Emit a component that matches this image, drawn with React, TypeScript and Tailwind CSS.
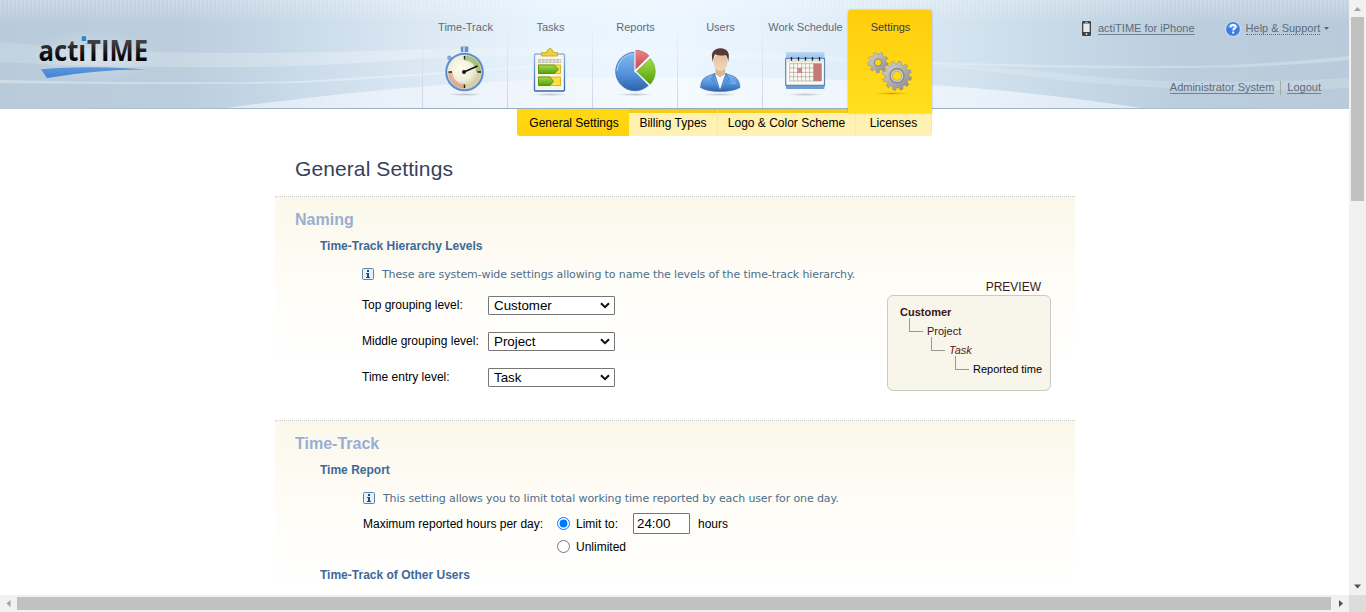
import React from "react";

const BG_STRIPES =
  "absolute inset-x-0 top-0 h-6 bg-[repeating-linear-gradient(90deg,rgba(255,255,255,0.18)_0px,rgba(255,255,255,0.18)_2px,transparent_2px,transparent_4px)] [mask-image:linear-gradient(#000,transparent)]";

function HeaderBackdrop() {
  return (
    <div className="absolute inset-0 overflow-hidden bg-[linear-gradient(90deg,#b9cbdb_0px,#bccddd_180px,#c5d7e6_270px,#dbe8f4_420px,#e9f5fe_560px,#ebf6ff_675px,#e4f1fb_790px,#d7e6f2_932px,#c8dae8_1050px,#bccede_1180px,#b9cbdb_1349px)]">
      <div className="absolute inset-x-0 top-0 h-6 bg-linear-to-b from-white/15 to-transparent" />
      <div className={BG_STRIPES} />
      <svg className="absolute inset-0" width="1349" height="109" viewBox="0 0 1349 109">
        <path d="M0 42 Q110 52 215 53 Q330 53 430 49 L430 58 Q330 66 250 67 Q100 68 0 62Z" fill="url(#band)" />
        <path d="M430 49 Q560 44 700 50 Q820 55 932 62 L932 66 Q800 60 700 58 Q560 54 430 58Z" fill="#fff" opacity=".18" />
        <path d="M932 62 Q1060 66 1180 66 Q1270 65 1349 56 L1349 60 Q1270 68 1180 68 Q1060 69 932 64Z" fill="#fff" opacity=".25" />
        <path d="M932 64 Q1010 68 1050 72 Q1180 88 1349 78 L1349 88 Q1180 94 1050 79 Q1000 72 932 66Z" fill="#fff" opacity=".16" />
        <path d="M0 80 Q200 84 300 81 Q430 73 620 60 Q430 76 300 83 Q200 85 0 83Z" fill="#fff" opacity=".32" />
        <path d="M225 108 Q350 92 430 86 Q560 76 675 77 Q820 77 932 85 Q1040 92 1142 108Z" fill="url(#hill)" />
        <path d="M0 108.5H1349" stroke="url(#edge)" />
        <defs>
          <linearGradient id="band" x1="0" x2="430" y1="0" y2="0" gradientUnits="userSpaceOnUse">
            <stop offset="0" stopColor="#fff" stopOpacity=".14" />
            <stop offset="1" stopColor="#fff" stopOpacity=".28" />
          </linearGradient>
          <linearGradient id="hill" x1="225" x2="1142" y1="0" y2="0" gradientUnits="userSpaceOnUse">
            <stop offset="0" stopColor="#dfe8f2" />
            <stop offset=".2" stopColor="#ecf2fa" />
            <stop offset=".5" stopColor="#f5faff" />
            <stop offset=".8" stopColor="#ebf2fa" />
            <stop offset="1" stopColor="#dde8f2" />
          </linearGradient>
          <linearGradient id="edge" x1="0" x2="1349" y1="0" y2="0" gradientUnits="userSpaceOnUse">
            <stop offset="0" stopColor="#b9cbdb" />
            <stop offset=".2" stopColor="#9fb6cc" />
            <stop offset=".5" stopColor="#8fa6bb" />
            <stop offset=".8" stopColor="#9fb6cc" />
            <stop offset="1" stopColor="#b9cbdb" />
          </linearGradient>
        </defs>
      </svg>
    </div>
  );
}

function Logo() {
  return (
    <svg width="130" height="56" viewBox="30 28 130 56">
      <defs>
        <linearGradient id="ink" x1="0" x2="0" y1="40" y2="61" gradientUnits="userSpaceOnUse">
          <stop offset="0" stopColor="#444" />
          <stop offset=".7" stopColor="#111" />
          <stop offset="1" stopColor="#000" />
        </linearGradient>
        <linearGradient id="swoosh" x1="0" x2="0" y1="0" y2="1">
          <stop offset="0" stopColor="#6098da" />
          <stop offset="1" stopColor="#3f82d6" />
        </linearGradient>
        <radialGradient id="halo">
          <stop offset="0" stopColor="#fff" stopOpacity=".3" />
          <stop offset="1" stopColor="#fff" stopOpacity="0" />
        </radialGradient>
      </defs>
      <ellipse cx="94" cy="56" rx="64" ry="27" fill="url(#halo)" />
      <text x="38.5" y="60.5" fontSize="28.5" fontWeight="700" fontFamily="'Open Sans', sans-serif" fill="url(#ink)" textLength="109.5" lengthAdjust="spacingAndGlyphs">
        actiTIME
      </text>
      <rect x="80" y="35" width="7.5" height="8.6" fill="#c3d2e0" />
      <rect x="81.7" y="36.2" width="4.4" height="4.8" fill="#2f86c8" />
      <path d="M41 69.3 Q60 67 92 67.2 Q125 67.8 147 69.5 Q100 69 47 78Z" fill="url(#swoosh)" />
    </svg>
  );
}

const Shadow = () => <ellipse cx="24" cy="47.5" rx="18" ry="1.6" fill="url(#shade)" />;

function StopwatchIcon() {
  return (
    <g>
      <Shadow />
      <rect x="19.800" y="-.5" width="7.500" height="5.5" rx="1" fill="#5f92cc" />
      <rect x="22" y="0" width="2" height="5" fill="#a9cbee" />
      <circle cx="8.300" cy="10.8" r="2.2" fill="#7ea8d8" />
      <circle cx="23.500" cy="25" r="18.3" fill="url(#dial)" stroke="#5b8fd2" strokeWidth="2" />
      <path d="M23.500 8.500A16.500 16.500 0 0 1 40 25H35A11.500 11.500 0 0 0 23.500 13.500Z" fill="#8fb35c" opacity=".7" />
      <path d="M23.500 41.500A16.500 16.500 0 0 1 7 25H11.500A12 12 0 0 0 23.500 37Z" fill="#dd9a88" opacity=".7" />
      <path d="M23.500 9v3.500M23.500 37.500v3.500M7.500 25H11M36.500 25H40" stroke="#222" strokeWidth="1.4" />
      <path d="M23 25L36.500 19" stroke="#111" strokeWidth="1.400" />
      <circle cx="23" cy="25" r="2" fill="#111" />
    </g>
  );
}

function ClipboardIcon() {
  return (
    <g>
      <Shadow />
      <rect x="8.500" y="7" width="30" height="37" rx="1" fill="#f8f6ea" stroke="url(#frame)" strokeWidth="1.300" />
      <path d="M15.500 5.500h5.500v-2h1a2 2 0 0 1 4 0h1v2H31.500v3.500h-16Z" fill="#ecd23f" stroke="#c9a820" strokeWidth=".9" />
      <path d="M12 12.900h23M12 15.100h23" stroke="#888" strokeWidth=".8" strokeDasharray="3 .6" />
      <g stroke="#d3b520" fill="#ffe03a" strokeWidth=".9">
        <rect x="12.500" y="18" width="22" height="8.500" />
        <rect x="12.500" y="30" width="22" height="8.500" />
      </g>
      <path d="M12.500 18H28.500L32.500 22.250L28.500 26.500H12.500Z" fill="url(#green)" stroke="#3f8a0c" strokeWidth=".7" />
      <path d="M12.500 30H24L27.500 34.250L24 38.500H12.500Z" fill="url(#green)" stroke="#3f8a0c" strokeWidth=".7" />
    </g>
  );
}

function PieIcon() {
  return (
    <g>
      <Shadow />
      <path d="M23.500 5.200A19.300 19.300 0 1 0 37.500 38.300L23.500 24.500Z" fill="url(#blue)" stroke="#3f79be" strokeWidth=".9" />
      <path d="M22.500 7A17.500 17.500 0 0 0 6 24" stroke="#a9cdf1" strokeWidth="1" fill="none" />
      <path d="M24.300 3.300A19 19 0 0 1 38 8.800L24.300 22.800Z" fill="url(#red)" stroke="#c24f55" strokeWidth=".6" />
      <path d="M39.300 11.500A19 19 0 0 1 39 37.500L25.500 24.500Z" fill="url(#green)" stroke="#66a91c" strokeWidth=".6" />
      <path d="M23.900 3V24.300L39 9.500M24.500 24.500L38.500 38.300" stroke="#f5faff" strokeWidth="1.200" fill="none" />
    </g>
  );
}

function UserIcon() {
  return (
    <g>
      <Shadow />
      <path d="M4.500 40.500Q5 31 12 29L19 26.500h10L37 29Q43.500 31.500 44 40.500Q37 44.500 24 44.500T4.500 40.500Z" fill="url(#blue)" stroke="#2f69ae" strokeWidth=".6" />
      <path d="M18.500 26.500L24 43.500L30 26.500Z" fill="#f6f9fd" />
      <path d="M18.500 26L15.500 32L24 43.500ZM30 26L33 32L24 43.500Z" fill="#5f9ade" stroke="#2f69ae" strokeWidth=".5" />
      <path d="M19.500 20h9.500v7l-5 3.500l-4.500-3.500Z" fill="#dcb592" />
      <ellipse cx="24.500" cy="15" rx="7" ry="9" fill="url(#skin)" />
      <path d="M16.800 15Q14.500 6 18 3.500Q23 -.5 29.500 2.500Q34.500 5 32.200 15Q31.800 10 29.500 8Q24 9.500 19 7.200Q17.500 10 16.800 15Z" fill="#5a3833" />
      <path d="M35 36.500l2.500-3l2 3Z" fill="none" stroke="#8fc0f0" strokeWidth=".7" />
    </g>
  );
}

function CalendarIcon() {
  return (
    <g>
      <Shadow />
      <rect x="5" y="5" width="38.500" height="9" rx="1" fill="url(#sky)" />
      <rect x="5" y="36" width="38.500" height="6" rx="1" fill="#6e9ccd" />
      <rect x="4.700" y="11.500" width="38.800" height="26.800" fill="#fbfaf3" stroke="#5a87b9" strokeWidth="1.200" />
      <path d="M5.300 12h37.600v3.500H5.300Z" fill="#e9e5d6" />
      <path d="M32.500 16.500h8v17.500h-8Z" fill="#cc7774" />
      <path d="M16.500 21h4.500v5h-4.500Z" fill="#d98886" />
      <path d="M8.500 16.700h32M8.500 21h32M8.500 25.400h32M8.500 29.700h32M8.500 34h32M8.700 16.500v17.500M12.600 16.500v17.500M16.600 16.500v17.500M20.600 16.500v17.500M24.600 16.500v17.500M28.600 16.500v17.500M32.600 16.500v17.500M36.600 16.500v17.500M40.500 16.500v17.500" stroke="#9c8f86" strokeWidth=".55" />
      <path d="M10.500 10v3.800M17.500 10v3.800M24.500 10v3.800M31.500 10v3.800M38.500 10v3.800" stroke="#1d2430" strokeWidth="1.300" />
    </g>
  );
}

function gearPath(cx: number, cy: number, inner: number, outer: number, teeth: number) {
  const step = (Math.PI * 2) / teeth;
  const at = (r: number, a: number) => `${(cx + r * Math.cos(a)).toFixed(2)} ${(cy + r * Math.sin(a)).toFixed(2)}`;
  return (
    Array.from({ length: teeth }, (_, i) => {
      const a = i * step + 0.2;
      return `${i ? "L" : "M"}${at(inner, a - step * 0.32)}L${at(outer, a - step * 0.2)}L${at(outer, a + step * 0.2)}L${at(inner, a + step * 0.32)}`;
    }).join("") + "Z"
  );
}

function GearsIcon() {
  return (
    <g>
      <ellipse cx="26" cy="46.500" rx="19" ry="1.500" fill="url(#goldShade)" />
      <path d={gearPath(12, 15.5, 8, 10.4, 9)} fill="url(#steel)" stroke="#85827c" strokeWidth=".4" />
      <circle cx="12" cy="15.500" r="4.200" fill="#8f8e8c" />
      <circle cx="12" cy="15.500" r="3" fill="#ffd60f" />
      <path d={gearPath(31, 28.8, 11.8, 14.6, 12)} fill="url(#steel)" stroke="#78756f" strokeWidth=".4" />
      <circle cx="31" cy="28.800" r="7" fill="#cfcfce" stroke="#8b8986" strokeWidth="1.400" />
      <circle cx="31" cy="28.800" r="4.600" fill="#ffd914" stroke="#98958e" strokeWidth=".6" />
    </g>
  );
}

function IconDefs() {
  return (
    <svg width="0" height="0" className="absolute">
      <defs>
        <radialGradient id="shade"><stop offset="0" stopColor="#9aa3ad" stopOpacity=".6" /><stop offset="1" stopColor="#9aa3ad" stopOpacity="0" /></radialGradient>
        <radialGradient id="goldShade"><stop offset="0" stopColor="#a57c00" stopOpacity=".65" /><stop offset="1" stopColor="#c79a08" stopOpacity="0" /></radialGradient>
        <radialGradient id="dial" cx=".4" cy=".4"><stop offset="0" stopColor="#fffef2" /><stop offset=".7" stopColor="#efecd6" /><stop offset="1" stopColor="#d5d0aa" /></radialGradient>
        <linearGradient id="frame" x1="0" x2="0" y1="0" y2="1"><stop offset="0" stopColor="#8fb4df" /><stop offset="1" stopColor="#2f66b0" /></linearGradient>
        <linearGradient id="green" x1="0" x2="0" y1="0" y2="1"><stop offset="0" stopColor="#a6dc4d" /><stop offset="1" stopColor="#529f0a" /></linearGradient>
        <linearGradient id="blue" x1="0" x2="0" y1="0" y2="1"><stop offset="0" stopColor="#85b9ee" /><stop offset=".55" stopColor="#5594db" /><stop offset="1" stopColor="#2b63ad" /></linearGradient>
        <linearGradient id="red" x1="0" x2="0" y1="0" y2="1"><stop offset="0" stopColor="#e8878a" /><stop offset="1" stopColor="#c6444d" /></linearGradient>
        <linearGradient id="skin" x1="0" x2="0" y1="0" y2="1"><stop offset="0" stopColor="#e0bb9a" /><stop offset="1" stopColor="#f2d9bd" /></linearGradient>
        <linearGradient id="sky" x1="0" x2="0" y1="0" y2="1"><stop offset="0" stopColor="#bdd8f3" /><stop offset="1" stopColor="#8fb8e4" /></linearGradient>
        <linearGradient id="steel" x1="0" x2="1" y1="0" y2="1"><stop offset="0" stopColor="#d8d8d8" /><stop offset=".5" stopColor="#b0b0b0" /><stop offset="1" stopColor="#868686" /></linearGradient>
      </defs>
    </svg>
  );
}

const TABS = [
  { label: "Time-Track", icon: <StopwatchIcon /> },
  { label: "Tasks", icon: <ClipboardIcon /> },
  { label: "Reports", icon: <PieIcon /> },
  { label: "Users", icon: <UserIcon /> },
  { label: "Work Schedule", icon: <CalendarIcon /> },
];

function TabBody({ label, icon }: { label: string; icon: React.ReactNode }) {
  return (
    <>
      <span className="h-4 pl-px text-[11px] leading-4 whitespace-nowrap">{label}</span>
      <svg className="mt-[11px]" width="50" height="50" viewBox="-1 -1 50 50">{icon}</svg>
    </>
  );
}

function Header() {
  return (
    <header className="relative h-[109px] w-[1349px] shrink-0">
      <HeaderBackdrop />
      <div className="relative flex h-full">
        <div className="w-[422px] pt-7 pl-[30px]"><Logo /></div>
        <nav className="flex text-[#5d6b79]">
          {TABS.map((t) => (
            <div key={t.label} className="flex h-[108px] w-[85px] flex-col items-center border-l border-transparent pt-[19px] [border-image:linear-gradient(transparent_20%,#c9d5ea)_1]">
              <TabBody {...t} />
            </div>
          ))}
          <div className="mt-[10px] ml-px flex h-[103px] w-[84px] flex-col items-center rounded-t-[3px] bg-linear-to-b from-[#ffcd0b] to-[#ffdf1c] pt-[9px] text-[#333a44] shadow-[0_0_2px_rgba(90,110,140,0.5)]">
            <TabBody label="Settings" icon={<GearsIcon />} />
          </div>
        </nav>
        <div className="flex flex-1 flex-col text-[11px] leading-[12px] text-[#5c6b7a]">
          <div className="mt-[21px] flex h-[16px] items-start pl-[150px]">
            <svg width="9" height="15" viewBox="0 0 9 15" className="shrink-0">
              <rect width="9" height="15" rx="1.200" fill="#3e4247" />
              <rect x="1.300" y="2.500" width="6.400" height="8.500" fill="#e4e9ee" />
              <path d="M3 1.300h3" stroke="#ddd" strokeWidth=".7" />
              <circle cx="4.500" cy="12.900" r="1" fill="#ddd" />
            </svg>
            <a className="mt-[1px] ml-[7px] border-b border-[#74818e] whitespace-nowrap">actiTIME for iPhone</a>
            <svg width="16" height="16" viewBox="0 0 16 16" className="ml-[30px] shrink-0">
              <circle cx="8" cy="8" r="7.400" fill="#3b7de0" stroke="#e2edfb" strokeWidth=".8" />
              <path d="M2.500 6A6 6 0 0 1 13.500 6Q8 9 2.500 6Z" fill="#8fbaf3" opacity=".6" />
              <path d="M5.500 6.300Q5.600 4 8.100 4T10.600 6.100Q10.600 7.300 9.100 7.900Q8.200 8.400 8.200 9.600" fill="none" stroke="#fff" strokeWidth="1.800" />
              <rect x="7.200" y="10.600" width="2" height="1.900" fill="#fff" />
            </svg>
            <a className="mt-[1px] ml-[5px] border-b border-dotted border-[#5c6b7a] whitespace-nowrap">Help &amp; Support</a>
            <svg width="5" height="3" className="mt-[6px] ml-[4px]"><path d="M0 0h5L2.500 3Z" fill="#5c6b7a" /></svg>
          </div>
          <div className="mt-[44px] flex items-start justify-end pr-[28px]">
            <a className="border-b border-[#74818e]">Administrator System</a>
            <i className="mx-[6px] h-[14px] w-px bg-[#a8aaa8]" />
            <a className="border-b border-[#74818e]">Logout</a>
          </div>
        </div>
      </div>
    </header>
  );
}

function SubMenu() {
  const item = "flex h-full items-center justify-center border-t-4 border-[#f6cd14] bg-[#fff1b1] pb-[4px] border-r border-r-[#fae8a0]";
  return (
    <div className="ml-[517px] flex h-[27px] w-[415px] shrink-0 overflow-hidden rounded-b-[3px] text-[12px] leading-[14px] text-black">
      <div className="flex h-full w-[112px] items-center justify-center bg-linear-to-b from-[#ffd913] to-[#ffd20d] pl-[2px]">General Settings</div>
      <div className={`${item} w-[89px]`}>Billing Types</div>
      <div className={`${item} w-[138px]`}>Logo &amp; Color Scheme</div>
      <div className={`${item} w-[76px]`}>Licenses</div>
    </div>
  );
}

function Info({ children }: { children: React.ReactNode }) {
  return (
    <div className="flex h-4 items-center text-[11px] leading-4 text-[#4f6d8c]">
      <svg width="12" height="12" viewBox="0 0 12 12" className="mr-[8px] shrink-0">
        <rect x=".5" y=".5" width="11" height="11" rx="1" fill="#e6f1fb" stroke="#5f82a8" />
        <path d="M5 2h2v2H5ZM4 5h3v4h1v1H4V9h1V6H4Z" fill="#1d4d86" />
      </svg>
      <span className="pt-px font-['DejaVu_Sans',sans-serif] tracking-[-0.115px] whitespace-nowrap">{children}</span>
    </div>
  );
}

function Section({ title, className, children }: { title: string; className: string; children: React.ReactNode }) {
  return (
    <section className={`flex flex-col border-t border-dotted border-[#c6c8c8] bg-[linear-gradient(#fbf8eb,#fffefb_120px,#fff_170px)] pt-[13px] ${className}`}>
      <h2 className="h-5 pl-5 text-[16px] leading-5 font-bold text-[#98afd3]">{title}</h2>
      <div className="-mt-px flex flex-col">{children}</div>
    </section>
  );
}

function SubHeading({ children }: { children: React.ReactNode }) {
  return <h3 className="mt-[9px] h-4 shrink-0 pl-[45px] text-[12px] leading-4 font-bold text-[#3e6999]">{children}</h3>;
}

function LevelRow({ label, value }: { label: string; value: string }) {
  return (
    <div className="flex h-9 items-center">
      <span className="w-[126px] whitespace-nowrap">{label}</span>
      <div className="flex h-[19px] w-[127px] items-center justify-between rounded-[1px] border border-[#767676] bg-white pr-[4px] pl-[5px] text-[13.33px] leading-[16px]">
        <span className="pt-[2px]">{value}</span>
        <svg width="10" height="7" viewBox="0 0 10 7"><path d="M1 1.200L5 5.200L9 1.200" fill="none" stroke="#111" strokeWidth="2" /></svg>
      </div>
    </div>
  );
}

function Elbow() {
  return <i className="-mt-[13px] mr-[4px] block h-[14px] w-[14px] shrink-0 border-b border-l border-[#999]" />;
}

function Preview() {
  return (
    <div className="flex w-[164px] flex-col pt-[14px]">
      <span className="h-[15px] pr-[10px] text-right text-[12px] leading-[15px] text-[#3a1a1a]">PREVIEW</span>
      <div className="h-[96px] rounded-[6px] border border-[#c9c9c5] bg-[#f8f5ea] pt-[7px] text-[11px] leading-[19px]">
        <div className="h-[19px] pl-[12px] font-bold text-[#3b1414]">Customer</div>
        <div className="flex h-[19px] items-center pl-[21px] text-[#3b1414]"><Elbow />Project</div>
        <div className="flex h-[19px] items-center pl-[43px] text-[#5b2020] italic"><Elbow />Task</div>
        <div className="flex h-[19px] items-center pl-[67px] whitespace-nowrap"><Elbow />Reported time</div>
      </div>
    </div>
  );
}

export default function App() {
  return (
    <div className="flex h-[612px] w-[1366px] flex-col overflow-hidden bg-white font-['Liberation_Sans',Arial,sans-serif] text-[12px] text-black">
      <IconDefs />
      <div className="flex h-[595px]">
        <div className="flex w-[1349px] flex-col overflow-hidden">
          <Header />
          <SubMenu />
          <main className="ml-[275px] w-[800px] shrink-0">
            <h1 className="mt-[21px] h-6 pl-5 text-[21px] leading-6 tracking-[0.1px] text-[#36425a]">General Settings</h1>
            <Section title="Naming" className="mt-[15px] h-[224px]">
              <SubHeading>Time-Track Hierarchy Levels</SubHeading>
              <div className="mt-3 flex pl-[87px]">
                <div className="w-[525px]">
                  <Info>These are system-wide settings allowing to name the levels of the time-track hierarchy.</Info>
                  <div className="mt-[5px]">
                    <LevelRow label="Top grouping level:" value="Customer" />
                    <LevelRow label="Middle grouping level:" value="Project" />
                    <LevelRow label="Time entry level:" value="Task" />
                  </div>
                </div>
                <Preview />
              </div>
            </Section>
            <Section title="Time-Track" className="h-[224px]">
              <SubHeading>Time Report</SubHeading>
              <div className="mt-3 pl-[88px]">
                <Info>This setting allows you to limit total working time reported by each user for one day.</Info>
                <div className="mt-[6px] flex h-6 items-center">
                  <span className="w-[194px]">Maximum reported hours per day:</span>
                  <input type="radio" name="limit" defaultChecked className="m-0 mb-px size-[13px] accent-[#0075ff]" />
                  <span className="ml-[6px] w-[57px]">Limit to:</span>
                  <div className="mb-[2px] flex h-[21px] w-[57px] items-center rounded-[1px] border border-[#767676] bg-white pt-px pl-[3px] text-[13.33px] leading-[16px]">24:00</div>
                  <span className="ml-[8px]">hours</span>
                </div>
                <div className="flex h-[22px] items-center pl-[194px]">
                  <input type="radio" name="limit" className="m-0 mb-px size-[13px]" />
                  <span className="ml-[6px]">Unlimited</span>
                </div>
              </div>
              <SubHeading>Time-Track of Other Users</SubHeading>
            </Section>
          </main>
        </div>
        <div className="flex w-[17px] flex-col items-center justify-between bg-[#f1f1f1]">
          <svg width="17" height="17"><path d="M5 11L8.500 7L12 11Z" fill="#a3a3a3" /></svg>
          <div className="mb-auto h-[184px] w-[13px] bg-[#c1c1c1]" />
          <svg width="17" height="17"><path d="M5 6.500L8.500 10.500L12 6.500Z" fill="#505050" /></svg>
        </div>
      </div>
      <div className="flex h-[17px] items-center bg-[#f1f1f1]">
        <svg width="17" height="17"><path d="M10.500 5L6.500 8.500L10.500 12Z" fill="#a3a3a3" /></svg>
        <div className="h-[13px] w-[1314px] bg-[#c1c1c1]" />
        <svg width="18" height="17"><path d="M8 5L12 8.500L8 12Z" fill="#505050" /></svg>
        <div className="h-[17px] w-[17px] bg-[#dcdcdc]" />
      </div>
    </div>
  );
}
